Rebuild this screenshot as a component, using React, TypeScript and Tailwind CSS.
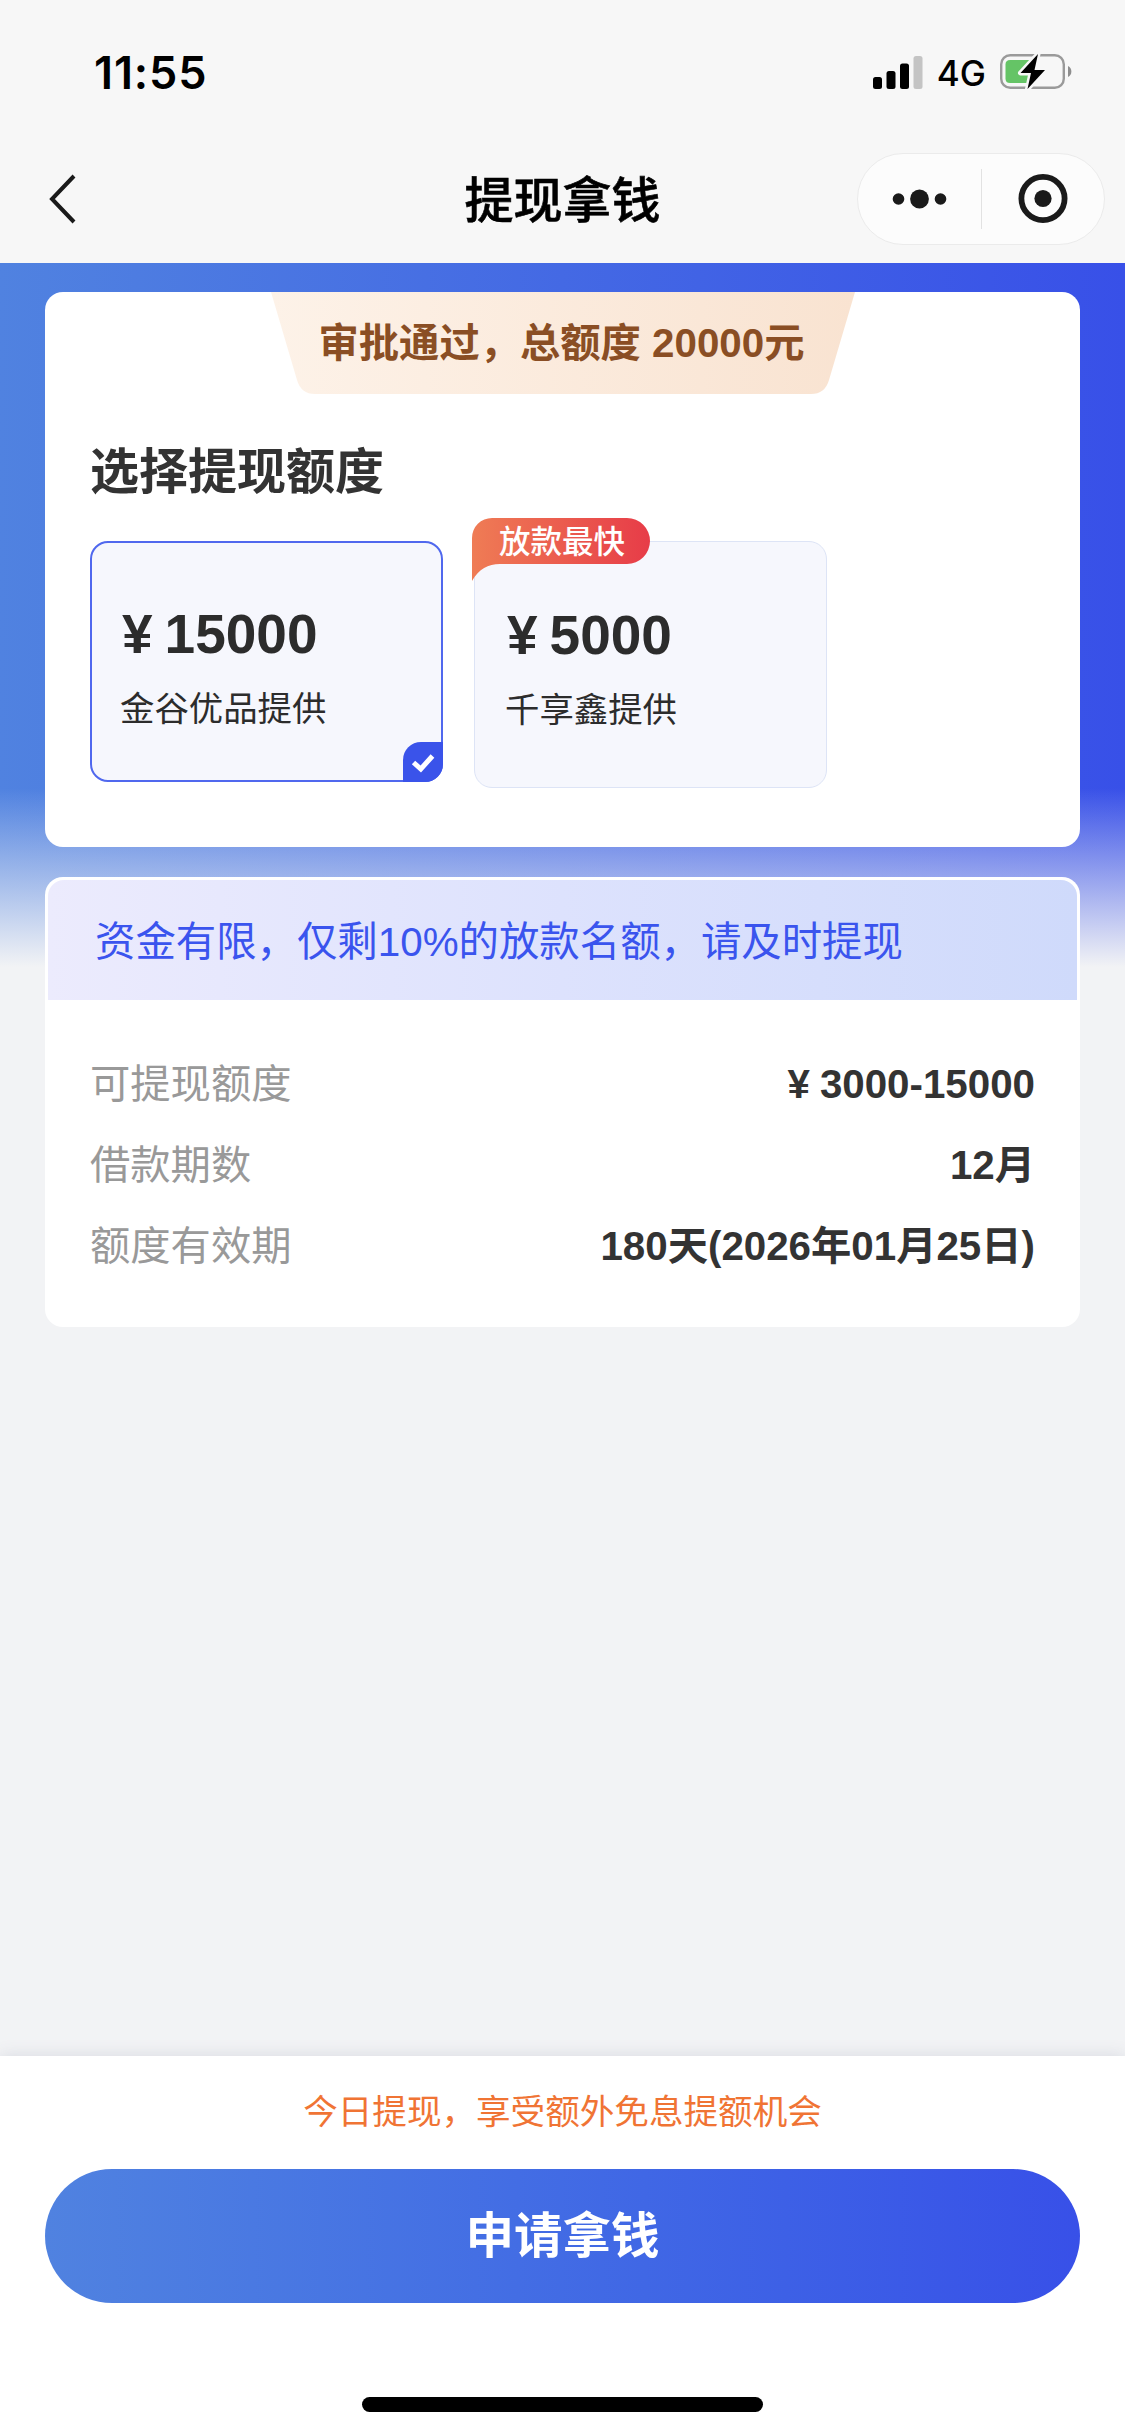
import React, { useState } from 'react';

const offers = [
  { id: 1, amount: '15000', provider: '金谷优品提供', tag: '' },
  { id: 2, amount: '5000', provider: '千享鑫提供', tag: '放款最快' },
];

const details = [
  { label: '可提现额度', value: '3000-15000', currency: true },
  { label: '借款期数', value: '12月', currency: false },
  { label: '额度有效期', value: '180天(2026年01月25日)', currency: false },
];

const StatusBar = () => (
  <div className="flex h-[144px] items-center justify-between pl-[94px] pr-[51px]">
    <span className="font-['Inter'] text-[45px] font-semibold leading-none tracking-[0.9px] text-black">11:55</span>
    <div className="flex items-center">
      <svg width="50" height="34" viewBox="0 0 50 34" className="mr-[14px]">
        <rect x="0" y="22" width="9" height="12" rx="2.5" fill="#000" />
        <rect x="13.5" y="16" width="9" height="18" rx="2.5" fill="#000" />
        <rect x="27" y="8.5" width="9" height="25.5" rx="2.5" fill="#000" />
        <rect x="40.5" y="1" width="9" height="33" rx="2.5" fill="#c4c4c4" />
      </svg>
      <span className="mr-[14px] mt-[2px] font-['Inter'] text-[35px] font-medium leading-none text-black">4G</span>
      <svg width="74" height="38" viewBox="0 0 74 38">
        <rect x="1.2" y="2.2" width="62.6" height="32.6" rx="9" fill="none" stroke="#9a9a9a" strokeWidth="2.4" />
        <path d="M68 13 C72.5 15 72.5 22 68 24 Z" fill="#8e8e8e" />
        <path d="M10 7 H33 V30 H10 Q5.5 30 5.5 25.5 V11.5 Q5.5 7 10 7 Z" fill="#65c466" />
        <path
          d="M38 1 L20.5 20 H31 L27.5 36 L45 17 H34.5 Z"
          fill="#000"
          stroke="#f7f7f7"
          strokeWidth="5"
          strokeLinejoin="round"
          paintOrder="stroke"
        />
      </svg>
    </div>
  </div>
);

const NavBar = () => (
  <div className="grid h-[119px] grid-cols-[1fr_auto_1fr] items-start px-[20px]">
    <svg width="32" height="56" viewBox="0 0 32 56" className="ml-[27px] mt-[27px]">
      <path d="M27 5 L5 28 L27 51" fill="none" stroke="#1a1a1a" strokeWidth="4" />
    </svg>
    <h1 className="mt-[27px] text-[49px] font-medium leading-[60px] text-black [-webkit-text-stroke:0.6px_#000]">
      提现拿钱
    </h1>
    <div className="mt-[9px] flex h-[92px] w-[248px] items-center justify-self-end rounded-full border border-[#ebebeb] bg-[#fcfcfc]">
      <svg width="123" height="60" viewBox="0 0 123 60">
        <circle cx="40.5" cy="30" r="5.8" fill="#1a1a1a" />
        <circle cx="61.5" cy="30" r="9.4" fill="#1a1a1a" />
        <circle cx="82.5" cy="30" r="5.8" fill="#1a1a1a" />
      </svg>
      <div className="h-[60px] w-px bg-[#e2e2e2]"></div>
      <svg width="122" height="60" viewBox="0 0 122 60">
        <circle cx="61" cy="29.5" r="21.6" fill="none" stroke="#1a1a1a" strokeWidth="5.8" />
        <circle cx="61" cy="29.5" r="8.6" fill="#1a1a1a" />
      </svg>
    </div>
  </div>
);

const App = () => {
  const [selected, setSelected] = useState(1);

  return (
    <div className="flex h-[2435px] w-[1125px] flex-col overflow-hidden bg-[#f2f3f5] font-['Liberation_Sans','Noto_Sans_CJK_SC',sans-serif]">
      <header className="h-[263px] shrink-0 bg-[#f7f7f7]">
        <StatusBar />
        <NavBar />
      </header>

      {/* Blue backdrop fades into the page grey */}
      <main className="flex flex-1 flex-col gap-[30px] bg-[linear-gradient(to_bottom,rgba(242,243,245,0)_525px,#f2f3f5_704px),linear-gradient(to_right,#5082e0,#3850e8)] px-[45px] pt-[29px]">
        {/* Offer card */}
        <section className="h-[555px] rounded-[18px] bg-white px-[45px]">
          <div className="relative mx-auto h-[102px] w-[584px]">
            <svg width="584" height="102" viewBox="0 0 584 102" className="absolute inset-0">
              <defs>
                <linearGradient id="ribbon" x1="0" x2="1" y1="0" y2="0">
                  <stop offset="0" stopColor="#fdf2e8" />
                  <stop offset="1" stopColor="#f9e3d1" />
                </linearGradient>
              </defs>
              <path d="M0 0 H584 L558 88 Q554 102 540 102 H44 Q30 102 26 88 Z" fill="url(#ribbon)" />
            </svg>
            <p className="relative whitespace-nowrap pr-[2px] text-center text-[40.3px] font-bold leading-[103px] text-[#8a4e24]">
              审批通过，总额度 20000元
            </p>
          </div>

          <h2 className="mt-[48px] text-[49px] font-bold leading-[60px] text-[#333]">选择提现额度</h2>

          <div className="mt-[39px] flex items-start gap-[31px]">
            {offers.map((offer) => (
              <button
                key={offer.id}
                onClick={() => setSelected(offer.id)}
                className={`relative flex w-[353px] flex-col items-start justify-start rounded-[18px] bg-[#f6f7fd] text-left ${
                  selected === offer.id
                    ? 'h-[241px] border-2 border-[#5068ee] pl-[28px] pt-[59px]'
                    : 'h-[247px] border border-[#dde4f6] pl-[30px] pt-[61px]'
                }`}
              >
                <div className="flex items-center pl-[2px] text-[55px] font-bold leading-[64px] text-[#2c2c2c]">
                  <span className="mr-[12px]">¥</span>
                  <span>{offer.amount}</span>
                </div>
                <p className="mt-[18px] text-[34.4px] leading-[50px] text-[#2c2c2c]">{offer.provider}</p>

                {offer.tag && (
                  <div className="absolute -left-[3px] -top-[24px] h-[64px] w-[178px]">
                    <svg width="178" height="64" viewBox="0 0 178 64" className="absolute inset-0">
                      <defs>
                        <linearGradient id="tag" x1="0" x2="1" y1="0" y2="0">
                          <stop offset="0" stopColor="#ef7c55" />
                          <stop offset="1" stopColor="#e73c48" />
                        </linearGradient>
                      </defs>
                      <path
                        d="M20 0 H155 A23 23 0 0 1 155 46 H28 C16 46 7 51 0 63 V20 A20 20 0 0 1 20 0 Z"
                        fill="url(#tag)"
                      />
                    </svg>
                    <span className="relative block pl-[2px] text-center text-[31.5px] font-medium leading-[48px] text-white">
                      {offer.tag}
                    </span>
                  </div>
                )}

                {selected === offer.id && (
                  <svg width="40" height="40" viewBox="0 0 40 40" className="absolute -bottom-[2px] -right-[2px]">
                    <path d="M0 40 V18 A18 18 0 0 1 18 0 H40 V22 A18 18 0 0 1 22 40 Z" fill="#3a53ea" />
                    <path d="M10.5 20.5 L17.8 27 L29.5 14" fill="none" stroke="#fff" strokeWidth="5" />
                  </svg>
                )}
              </button>
            ))}
          </div>
        </section>

        {/* Loan details */}
        <section className="h-[450px] rounded-[18px] bg-white p-[3px]">
          <div className="h-[120px] rounded-t-[16px] bg-[linear-gradient(to_right,#ecebfd,#dde2fd_50%,#cfdafb)] pl-[47px] text-[40.4px] leading-[124px] text-[#3a54ee]">
            资金有限，仅剩10%的放款名额，请及时提现
          </div>
          <div className="flex flex-col px-[42px] pt-[44px]">
            {details.map((row) => (
              <div key={row.label} className="flex h-[81px] items-center justify-between text-[40.3px] leading-[60px]">
                <span className="text-[#999]">{row.label}</span>
                <span className="flex items-center font-bold text-[#333]">
                  {row.currency && <span className="mr-[10px]">¥</span>}
                  {row.value}
                </span>
              </div>
            ))}
          </div>
        </section>
      </main>

      <footer className="flex h-[379px] shrink-0 flex-col items-center bg-white px-[45px] pt-[31px] shadow-[0_0_16px_rgba(80,90,120,0.16)]">
        <p className="text-[34.6px] leading-[50px] text-[#f07434]">今日提现，享受额外免息提额机会</p>
        <button className="mt-[32px] h-[134px] w-full rounded-full bg-linear-to-r from-[#5082e0] to-[#3850e8] text-[48.5px] font-bold leading-[132px] text-white">
          申请拿钱
        </button>
        <div className="mt-[94px] h-[15px] w-[401px] rounded-full bg-black"></div>
      </footer>
    </div>
  );
};

export default App;
